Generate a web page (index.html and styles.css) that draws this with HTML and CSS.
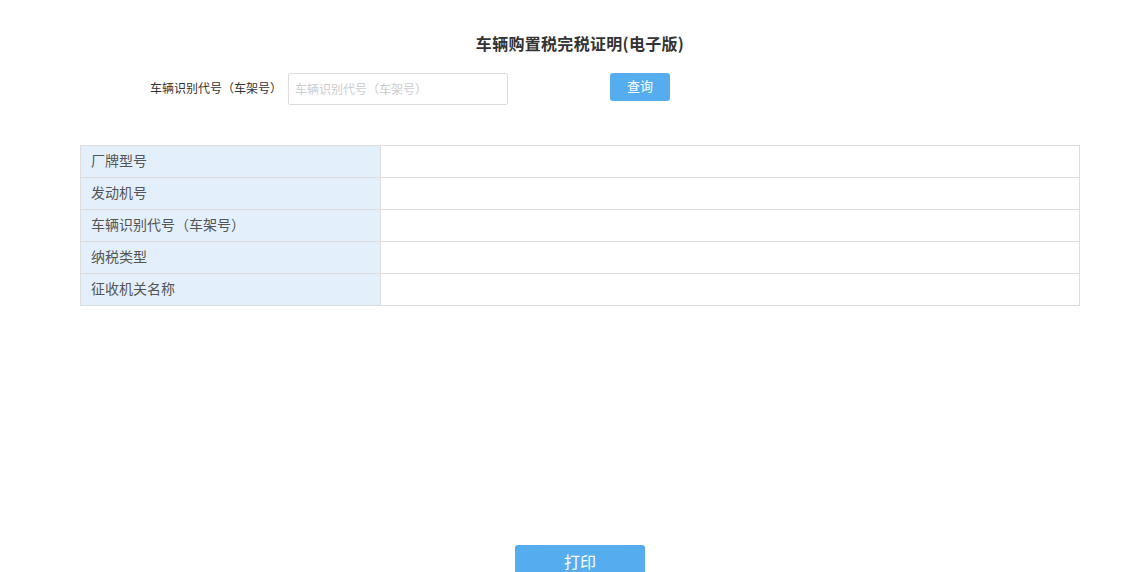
FILE: index.html
```html
<!DOCTYPE html>
<html lang="zh-CN">
<head>
  <meta charset="UTF-8" />
  <title>车辆购置税完税证明</title>
  <link rel="stylesheet" href="styles.css">
</head>
<body>
  <div class="container">
    <h1 class="title">车辆购置税完税证明(电子版)</h1>

    <div class="search">
      <label class="search-label" for="vin">车辆识别代号（车架号）</label>
      <input class="search-input" id="vin" type="text" placeholder="车辆识别代号（车架号）" />
      <button class="btn btn-query">查询</button>
    </div>

    <table class="info">
      <tr><td class="info-key">厂牌型号</td><td class="info-val"></td></tr>
      <tr><td class="info-key">发动机号</td><td class="info-val"></td></tr>
      <tr><td class="info-key">车辆识别代号（车架号）</td><td class="info-val"></td></tr>
      <tr><td class="info-key">纳税类型</td><td class="info-val"></td></tr>
      <tr><td class="info-key">征收机关名称</td><td class="info-val"></td></tr>
    </table>

    <div class="actions">
      <button class="btn btn-print">打印</button>
    </div>
  </div>
</body>
</html>
```

FILE: styles.css
```css
body {
  margin: 0;
  font-family: "Noto Sans CJK SC", "Noto Sans", sans-serif;
  color: #333;
  background: #fff;
}

.container {
  width: 1000px;
  margin-left: 80px;
  padding-top: 31px;
}

.title {
  margin: 0;
  font-size: 16px;
  font-weight: bold;
  line-height: 24px;
  letter-spacing: 0.3px;
  text-align: center;
  color: #333;
}

.search {
  display: flex;
  align-items: flex-start;
  margin-top: 18px;
  height: 32px;
}

.search-label {
  width: 202px;
  font-size: 12px;
  line-height: 30px;
  text-align: right;
  color: #333;
}

.search-input {
  box-sizing: border-box;
  width: 220px;
  height: 32px;
  margin-left: 6px;
  padding: 0 6px 2px;
  border: 1px solid #ddd;
  border-radius: 2px;
  font-family: inherit;
  font-size: 12px;
  outline: none;
}

.search-input::placeholder {
  color: #ccc;
}

.btn {
  border: none;
  border-radius: 3px;
  background: #55acee;
  color: #fff;
  font-family: inherit;
  cursor: pointer;
}

.btn-query {
  width: 60px;
  height: 28px;
  margin-left: 102px;
  padding: 0 0 3px;
  font-size: 13px;
}

.info {
  width: 100%;
  margin-top: 40px;
  border-collapse: collapse;
  font-size: 14px;
}

.info td {
  box-sizing: border-box;
  height: 32px;
  padding: 0 10px 3px;
  border: 1px solid #ddd;
}

.info-key {
  width: 300px;
  background: #e3f0fc;
  color: #555;
}

.actions {
  display: flex;
  justify-content: center;
  margin-top: 239px;
}

.btn-print {
  width: 130px;
  height: 36px;
  padding: 0 0 4px;
  font-size: 16px;
}
```
